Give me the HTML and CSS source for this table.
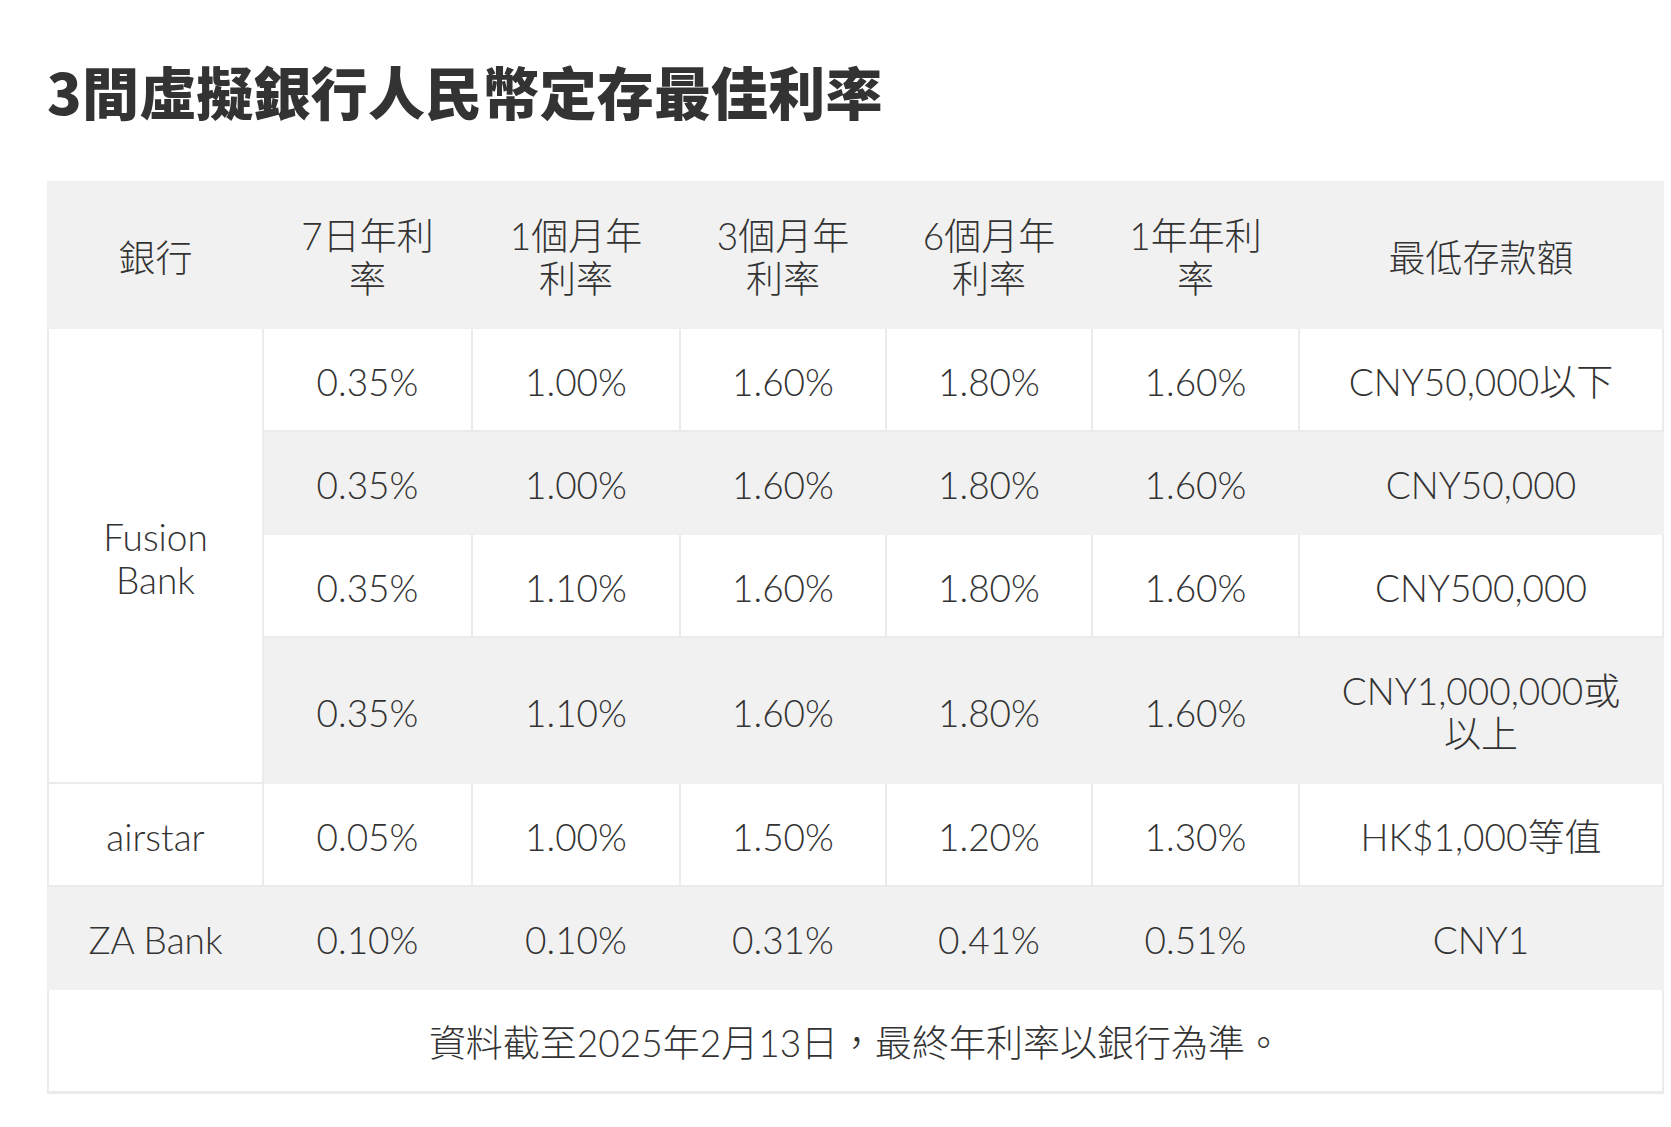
FILE: index.html
```html
<!DOCTYPE html>
<html lang="zh-Hant">
<head>
<meta charset="utf-8">
<title>3間虛擬銀行人民幣定存最佳利率</title>
<link rel="stylesheet" href="styles.css">
</head>
<body>
<main class="page">
  <h2 class="title">3間虛擬銀行人民幣定存最佳利率</h2>
  <table class="rates">
    <colgroup>
      <col class="c-bank">
      <col class="c-rate1">
      <col class="c-rate2">
      <col class="c-rate3">
      <col class="c-rate4">
      <col class="c-rate5">
      <col class="c-min">
    </colgroup>
    <thead>
      <tr>
        <th>銀行</th>
        <th>7日年利率</th>
        <th>1個月年利率</th>
        <th>3個月年利率</th>
        <th>6個月年利率</th>
        <th>1年年利率</th>
        <th>最低存款額</th>
      </tr>
    </thead>
    <tbody>
      <tr>
        <td rowspan="4" class="bank">Fusion<br>Bank</td>
        <td>0.35%</td><td>1.00%</td><td>1.60%</td><td>1.80%</td><td>1.60%</td><td>CNY50,000以下</td>
      </tr>
      <tr class="alt">
        <td>0.35%</td><td>1.00%</td><td>1.60%</td><td>1.80%</td><td>1.60%</td><td>CNY50,000</td>
      </tr>
      <tr>
        <td>0.35%</td><td>1.10%</td><td>1.60%</td><td>1.80%</td><td>1.60%</td><td>CNY500,000</td>
      </tr>
      <tr class="alt">
        <td>0.35%</td><td>1.10%</td><td>1.60%</td><td>1.80%</td><td>1.60%</td><td class="wrap">CNY1,000,000或<br>以上</td>
      </tr>
      <tr>
        <td>airstar</td><td>0.05%</td><td>1.00%</td><td>1.50%</td><td>1.20%</td><td>1.30%</td><td>HK$1,000等值</td>
      </tr>
      <tr class="alt">
        <td>ZA Bank</td><td>0.10%</td><td>0.10%</td><td>0.31%</td><td>0.41%</td><td>0.51%</td><td>CNY1</td>
      </tr>
      <tr>
        <td colspan="7" class="note">資料截至2025年2月13日，最終年利率以銀行為準。</td>
      </tr>
    </tbody>
  </table>
</main>
</body>
</html>
```
FILE: styles.css
```css
html, body {
  margin: 0;
  padding: 0;
  background: #ffffff;
}

.page {
  padding: 0 0 40px 47px;
  font-family: Lato, "Noto Sans CJK TC", sans-serif;
  color: #333333;
}

.title {
  margin: 0;
  padding-top: 56px;
  font-family: "Noto Sans CJK TC", sans-serif;
  font-weight: 900;
  font-size: 57px;
  line-height: 68px;
  letter-spacing: 0.2px;
  color: #333333;
}

.rates {
  margin-top: 57px;
  width: 1615px;
  table-layout: fixed;
  border-collapse: collapse;
  font-size: 37px;
  line-height: 43px;
  font-weight: 300;
}

.c-bank { width: 215px; }
.c-rate1 { width: 209px; }
.c-rate2 { width: 208px; }
.c-rate3 { width: 206px; }
.c-rate4 { width: 206px; }
.c-rate5 { width: 207px; }
.c-min { width: 364px; }

.rates th,
.rates td {
  border: 2px solid #ebebeb;
  padding: 31px 22px 27px;
  text-align: center;
  vertical-align: middle;
  font-weight: 300;
}

.rates thead th {
  background: #f1f1f1;
  border-color: #f1f1f1;
}

.rates tr.alt td {
  background: #f1f1f1;
  border-color: #f1f1f1;
}

.rates td.bank {
  background: #ffffff;
  border-color: #ebebeb;
}

.rates td.note {
  border-bottom-width: 3px;
}
```
